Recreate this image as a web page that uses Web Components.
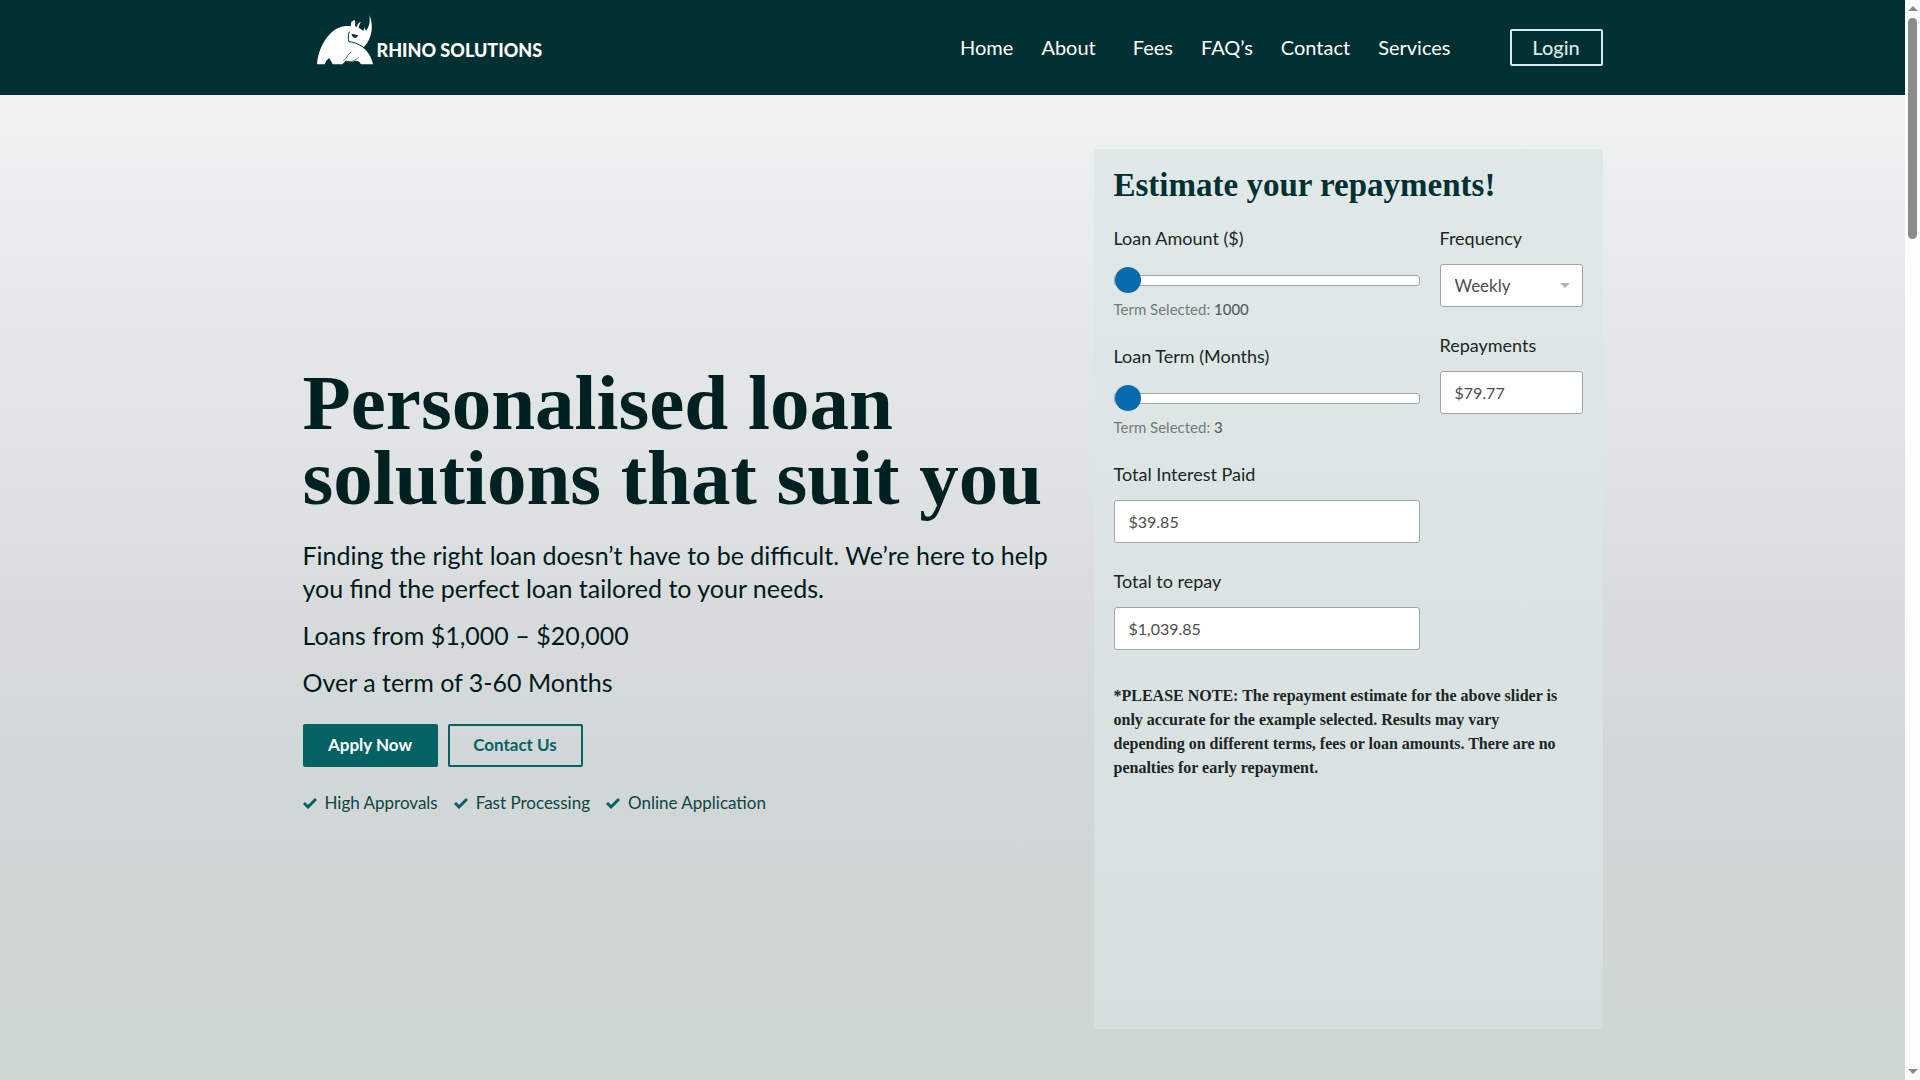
<!DOCTYPE html>
<html lang="en">
<head>
<meta charset="utf-8">
<title>Rhino Solutions</title>
<style>
    * {
        box-sizing: border-box; }
    body {
        margin: 0;
        min-height: 100vh;
        display: grid;
        grid-template-columns: minmax(0, 1fr) 15px;
        font-family: Lato, "Open Sans", sans-serif;
        color: #001a1b;
        --serif: "Liberation Serif", serif;
        --dark: #003032;
        --teal: #046265; }
    .page {
        display: flex;
        flex-direction: column; }
</style>
</head>
<body>
<div class="page">
    <site-header>
        <nav-link>Home</nav-link>
        <nav-link class="parent">About</nav-link>
        <nav-link>Fees</nav-link>
        <nav-link>FAQ’s</nav-link>
        <nav-link>Contact</nav-link>
        <nav-link>Services</nav-link>
    </site-header>
    <hero-section>
        <hero-copy>
            <span slot="title">Personalised loan solutions that suit you</span>
            <action-button slot="actions" primary>Apply Now</action-button>
            <action-button slot="actions">Contact Us</action-button>
            <check-item slot="checks">High Approvals</check-item>
            <check-item slot="checks">Fast Processing</check-item>
            <check-item slot="checks">Online Application</check-item>
        </hero-copy>
        <loan-calculator slot="aside">
            <range-field label="Loan Amount ($)" min="1000" max="20000" value="1000"></range-field>
            <range-field label="Loan Term (Months)" min="3" max="60" value="3"></range-field>
            <text-field label="Total Interest Paid" value="$39.85"></text-field>
            <text-field label="Total to repay" value="$1,039.85"></text-field>
            <select-field slot="side" label="Frequency" options="Weekly,Fortnightly,Monthly"></select-field>
            <text-field slot="side" label="Repayments" value="$79.77"></text-field>
            <span slot="note">*PLEASE NOTE: The repayment estimate for the above slider is only accurate for the example selected. Results may vary depending on different terms, fees or loan amounts. There are no penalties for early repayment.</span>
        </loan-calculator>
    </hero-section>
</div>
<scroll-rail></scroll-rail>

<script>
const fieldStyle = `
    * {
        box-sizing: border-box; }
    :host {
        display: block; }
    label {
        display: block;
        margin-bottom: 15px;
        font-size: 18px;
        line-height: 22px;
        color: #1c2526; }
    input, select {
        display: block;
        width: 100%;
        height: 43px;
        margin: 0;
        padding: 0 14px;
        border: 1px solid #a0a5a6;
        border-radius: 3px;
        background: #fff;
        font: 16px Lato, sans-serif;
        color: #4d4d4d; }
`;

class SiteLogo extends HTMLElement {
    constructor() {
        super();
        this.attachShadow({mode: "open"}).innerHTML = `
        <style>
        :host {
            display: block; }
        a {
            display: flex;
            align-items: flex-end;
            gap: 3px;
            color: #fff;
            text-decoration: none; }
        span {
            padding-bottom: 4px;
            font-size: 18px;
            font-weight: 900;
            line-height: 22px;
            white-space: nowrap; }
        </style>
        <a href="#">
            <svg width="57" height="50" viewBox="0 0 171 150" aria-hidden="true">
                <path fill="#fff" d="M0 148C2 118 14 84 38 58C57 38 80 31 101 34L103 21L112 14C116 20 115 27 114 33L119 36C122 27 126 21 132 22C128 27 126 33 125 38L139 47L143 37L147 48C158 34 160 17 157 0C166 18 167 45 160 64C155 80 146 90 139 98C151 108 164 126 168 148H132C128 140 123 137 116 137C105 142 94 140 86 137L76 148H47C44 140 39 133 36 129L27 139L23 148Z"/>
                <path fill="none" stroke="#003032" stroke-width="3" d="M97 50C93 61 93 72 96 80C112 82 130 88 143 101"/>
                <path fill="none" stroke="#003032" stroke-width="2" d="M79 137C90 132 89 121 102 111M88 138C103 142 114 137 125 127"/>
                <path fill="#003032" d="M103 56L124 61L117 69L108 67Z"/>
            </svg>
            <span>RHINO SOLUTIONS</span>
        </a>
        `;
    }
}

class NavLink extends HTMLElement {
    constructor() {
        super();
        this.attachShadow({mode: "open"}).innerHTML = `
        <style>
        :host {
            display: block; }
        :host(.parent) {
            padding-right: 9px; }
        a {
            display: block;
            padding: 0 14px;
            font-size: 20px;
            line-height: 28px;
            color: #fff;
            text-decoration: none; }
        </style>
        <a href="#"><slot></slot></a>
        `;
    }
}

class SiteHeader extends HTMLElement {
    constructor() {
        super();
        this.attachShadow({mode: "open"}).innerHTML = `
        <style>
        * {
            box-sizing: border-box; }
        :host {
            display: block;
            background: var(--dark); }
        header {
            display: flex;
            align-items: flex-start;
            max-width: 1300px;
            height: 95px;
            margin: 0 auto; }
        site-logo {
            padding: 15px 0 0 14px; }
        nav {
            display: flex;
            margin: 33px 45px 0 auto; }
        .login {
            width: 93px;
            margin-top: 29px;
            border: 2px solid #d3eae8;
            border-radius: 2px;
            font-size: 20px;
            font-weight: 500;
            line-height: 33px;
            text-align: center;
            text-decoration: none;
            color: #d3eae8; }
        </style>
        <header>
            <site-logo></site-logo>
            <nav><slot></slot></nav>
            <a class="login" href="#">Login</a>
        </header>
        `;
    }
}

class HeroSection extends HTMLElement {
    constructor() {
        super();
        this.attachShadow({mode: "open"}).innerHTML = `
        <style>
        * {
            box-sizing: border-box; }
        :host {
            display: block;
            flex: 1;
            padding: 54px 0 51px;
            background: linear-gradient(#eff3f2 0%, #e5e9ea 20%, #dfe2e3 40%, #d9dbdc 51%, #d0d7d6 70%, #cfd7d5 100%); }
        main {
            display: grid;
            grid-template-columns: minmax(0, 791fr) minmax(0, 509fr);
            align-items: stretch;
            max-width: 1300px;
            margin: 0 auto; }
        .copy {
            display: flex;
            align-items: center;
            padding-right: 40px; }
        </style>
        <main>
            <div class="copy"><slot></slot></div>
            <slot name="aside"></slot>
        </main>
        `;
    }
}

class HeroCopy extends HTMLElement {
    constructor() {
        super();
        this.attachShadow({mode: "open"}).innerHTML = `
        <style>
        :host {
            display: block; }
        h1 {
            margin: 0 0 24px;
            font: bold 79px/75px var(--serif);
            color: #002122; }
        p {
            margin: 0 0 14px;
            font-size: 25px;
            line-height: 33px; }
        .actions {
            display: flex;
            gap: 10px;
            margin: 25px 0; }
        .checks {
            display: flex;
            gap: 16px; }
        </style>
        <h1><slot name="title"></slot></h1>
        <p>Finding the right loan doesn’t have to be difficult. We’re here to help you find the perfect loan tailored to your needs.</p>
        <p>Loans from $1,000 – $20,000</p>
        <p>Over a term of 3-60 Months</p>
        <div class="actions"><slot name="actions"></slot></div>
        <div class="checks"><slot name="checks"></slot></div>
        `;
    }
}

class ActionButton extends HTMLElement {
    constructor() {
        super();
        this.attachShadow({mode: "open"}).innerHTML = `
        <style>
        :host {
            display: block; }
        button {
            box-sizing: border-box;
            width: 135px;
            height: 43px;
            padding: 0 0 2px;
            border: 2px solid var(--teal);
            border-radius: 2px;
            background: transparent;
            font: bold 17px Lato, sans-serif;
            color: var(--teal); }
        :host([primary]) button {
            background: var(--teal);
            color: #fff; }
        </style>
        <button type="button"><slot></slot></button>
        `;
    }
}

class CheckItem extends HTMLElement {
    constructor() {
        super();
        this.attachShadow({mode: "open"}).innerHTML = `
        <style>
        :host {
            display: flex;
            align-items: center;
            gap: 8px;
            font-size: 17px;
            line-height: 22px;
            color: #0f4345; }
        </style>
        <svg width="14" height="12" viewBox="0 0 14 12" aria-hidden="true">
            <path fill="none" stroke="#046265" stroke-width="3" d="M1 6L5 10L13 2"/>
        </svg>
        <span><slot></slot></span>
        `;
    }
}

class LoanCalculator extends HTMLElement {
    constructor() {
        super();
        this.attachShadow({mode: "open"}).innerHTML = `
        <style>
        * {
            box-sizing: border-box; }
        :host {
            display: block;
            min-height: 880px;
            box-sizing: border-box;
            padding: 20px;
            background: linear-gradient(#e1e8e8, #dce4e3 50%, #d7dfde); }
        h2 {
            margin: 0 0 26px;
            font: bold 33px/32px var(--serif);
            color: var(--dark); }
        form {
            display: grid;
            grid-template-columns: minmax(0, 306fr) minmax(0, 143fr);
            gap: 20px; }
        .column {
            display: flex;
            flex-direction: column;
            gap: 27px; }
        p {
            margin: 34px 0 0;
            padding-right: 12px;
            font: bold 16px/24px var(--serif);
            color: #1c2526; }
        </style>
        <h2>Estimate your repayments!</h2>
        <form>
            <div class="column"><slot></slot></div>
            <div class="column"><slot name="side"></slot></div>
        </form>
        <p><slot name="note"></slot></p>
        `;
    }
}

class TextField extends HTMLElement {
    constructor() {
        super();
        this.attachShadow({mode: "open"});
    }

    connectedCallback() {
        this.shadowRoot.innerHTML = `
        <style>${fieldStyle}</style>
        <label for="field">${this.getAttribute("label")}</label>
        <input id="field" type="text" readonly value="${this.getAttribute("value")}">
        `;
    }
}

class SelectField extends HTMLElement {
    constructor() {
        super();
        this.attachShadow({mode: "open"});
    }

    connectedCallback() {
        const options = this.getAttribute("options").split(",");
        this.shadowRoot.innerHTML = `
        <style>${fieldStyle}
        .box {
            display: grid;
            align-items: center; }
        .box > * {
            grid-area: 1 / 1; }
        select {
            appearance: none;
            font-size: 17px; }
        svg {
            justify-self: end;
            margin-right: 13px;
            pointer-events: none; }
        </style>
        <label for="field">${this.getAttribute("label")}</label>
        <div class="box">
            <select id="field">${options.map(o => `<option>${o}</option>`).join("")}</select>
            <svg width="10" height="5" viewBox="0 0 10 5" aria-hidden="true"><path fill="#b3b3b3" d="M0 0H10L5 5Z"/></svg>
        </div>
        `;
    }
}

class RangeField extends HTMLElement {
    constructor() {
        super();
        this.attachShadow({mode: "open"});
    }

    connectedCallback() {
        this.shadowRoot.innerHTML = `
        <style>${fieldStyle}
        input {
            appearance: none;
            height: 32px;
            padding: 0;
            border: 0;
            background: transparent; }
        input::-webkit-slider-runnable-track {
            box-sizing: border-box;
            height: 11px;
            border: 1px solid #a0a5a6;
            border-radius: 3px;
            background: #fff; }
        input::-webkit-slider-thumb {
            appearance: none;
            width: 26px;
            height: 26px;
            margin-top: -9px;
            border-radius: 50%;
            background: #066aab; }
        div {
            margin-top: 4px;
            font-size: 15px;
            line-height: 18px;
            color: #737b7b; }
        b {
            font-weight: 500;
            color: #565d5d; }
        </style>
        <label for="field">${this.getAttribute("label")}</label>
        <input id="field" type="range" min="${this.getAttribute("min")}" max="${this.getAttribute("max")}" value="${this.getAttribute("value")}">
        <div>Term Selected: <b>${this.getAttribute("value")}</b></div>
        `;
        const output = this.shadowRoot.querySelector("b");
        this.shadowRoot.querySelector("input").addEventListener("input", e => {
            output.textContent = e.target.value;
        });
    }
}

class ScrollRail extends HTMLElement {
    constructor() {
        super();
        this.attachShadow({mode: "open"}).innerHTML = `
        <style>
        :host {
            position: sticky;
            top: 0;
            box-sizing: border-box;
            display: flex;
            flex-direction: column;
            align-items: center;
            height: 100vh;
            padding: 6px 0;
            background: #fcfcfc; }
        .thumb {
            width: 9px;
            height: 221px;
            margin: 7px 0 auto;
            border-radius: 5px;
            background: #8b8b8b; }
        </style>
        <svg width="10" height="5" viewBox="0 0 10 5" aria-hidden="true"><path fill="#8b8b8b" d="M0 5L5 0L10 5Z"/></svg>
        <div class="thumb"></div>
        <svg width="10" height="5" viewBox="0 0 10 5" aria-hidden="true"><path fill="#8b8b8b" d="M0 0H10L5 5Z"/></svg>
        `;
    }
}

customElements.define("site-logo", SiteLogo);
customElements.define("nav-link", NavLink);
customElements.define("site-header", SiteHeader);
customElements.define("hero-section", HeroSection);
customElements.define("hero-copy", HeroCopy);
customElements.define("action-button", ActionButton);
customElements.define("check-item", CheckItem);
customElements.define("loan-calculator", LoanCalculator);
customElements.define("text-field", TextField);
customElements.define("select-field", SelectField);
customElements.define("range-field", RangeField);
customElements.define("scroll-rail", ScrollRail);
</script>
</body>
</html>
